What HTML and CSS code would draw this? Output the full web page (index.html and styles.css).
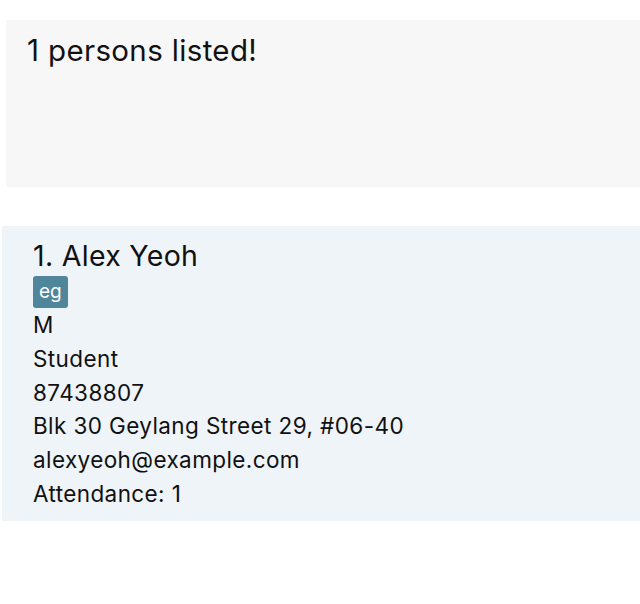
FILE: index.html
```html
<!DOCTYPE html>
<html>
<head>
<meta charset="utf-8">
<link rel="stylesheet" href="styles.css">
</head>
<body>
<div class="result">1 persons listed!</div>
<div class="card">
  <div class="name">1. Alex Yeoh</div>
  <div class="tags"><span class="tag">eg</span></div>
  <div class="field">M</div>
  <div class="field">Student</div>
  <div class="field">87438807</div>
  <div class="field">Blk 30 Geylang Street 29, #06-40</div>
  <div class="field">alexyeoh@example.com</div>
  <div class="field">Attendance: 1</div>
</div>
</body>
</html>
```
FILE: styles.css
```css
html, body {
  margin: 0;
  padding: 0;
  background: #ffffff;
  font-family: Inter, "Noto Sans", sans-serif;
  color: #111111;
}
.result {
  margin: 20px 0 0 6px;
  height: 167px;
  box-sizing: border-box;
  background: #f7f7f7;
  padding: 12px 0 0 21px;
  font-size: 29.5px;
  line-height: 36px;
  letter-spacing: 0.35px;
}
.card {
  margin: 39px 0 0 2px;
  height: 295px;
  box-sizing: border-box;
  background: #eff4f8;
  padding: 12px 0 0 31px;
  display: flex;
  flex-direction: column;
}
.name {
  font-size: 28.5px;
  line-height: 36px;
  letter-spacing: 0.3px;
}
.tags {
  display: flex;
  margin-top: 2px;
  height: 32px;
}
.tag {
  background: #4f869b;
  color: #ffffff;
  font-size: 19px;
  line-height: 32px;
  padding: 0 6px;
  border-radius: 3px;
}
.field {
  font-size: 22.5px;
  line-height: 33.8px;
  letter-spacing: 0.4px;
}
```
